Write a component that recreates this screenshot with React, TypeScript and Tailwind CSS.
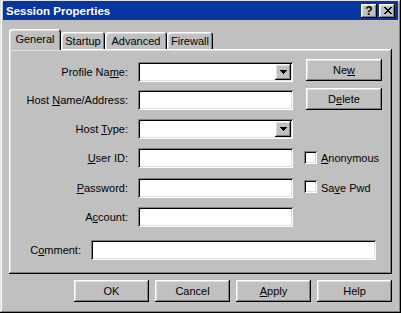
import React from "react";

const raised =
  "shadow-[inset_-1px_-1px_#000,inset_1px_1px_#fff,inset_-2px_-2px_#808080,inset_2px_2px_#dfdfdf]";
const sunken =
  "shadow-[inset_1px_1px_#808080,inset_-1px_-1px_#fff,inset_2px_2px_#000,inset_-2px_-2px_#dfdfdf]";
const tabEdge =
  "shadow-[inset_1px_1px_#fff,inset_-1px_0_#000,inset_-2px_0_#808080,inset_2px_2px_#dfdfdf]";

function Button({ children, className = "" }: { children: React.ReactNode; className?: string }) {
  return (
    <div className={`${raised} bg-[#c0c0c0] h-[22px] flex items-center justify-center leading-[15px] ${className}`}>
      {children}
    </div>
  );
}

function Field({ className = "", combo = false }: { className?: string; combo?: boolean }) {
  return (
    <div className={`${sunken} bg-white h-[20px] p-[2px] flex justify-end ${className}`}>
      {combo && (
        <div className={`${raised} bg-[#c0c0c0] w-[16px] h-[16px] flex items-center justify-center pb-[1px]`}>
          <svg width="7" height="4" viewBox="0 0 7 4">
            <path d="M0 0h7v1H0zM1 1h5v1H1zM2 2h3v1H2zM3 3h1v1H3z" fill="#000" />
          </svg>
        </div>
      )}
    </div>
  );
}

function Check({ children, className = "" }: { children: React.ReactNode; className?: string }) {
  return (
    <div className="flex items-start ml-[11px]">
      <div className={`${sunken} bg-white w-[13px] h-[13px] ${className}`} />
      <span className="ml-[4px] leading-[20px]">{children}</span>
    </div>
  );
}

function Label({ children, className = "w-[119px]" }: { children: React.ReactNode; className?: string }) {
  return <span className={`text-right leading-[20px] whitespace-nowrap ${className}`}>{children}</span>;
}

export default function App() {
  return (
    <div className="w-[401px] h-[313px] bg-[#c0c0c0] shadow-[inset_-1px_-1px_#000,inset_1px_1px_#dfdfdf,inset_-2px_-2px_#808080,inset_2px_2px_#fff] pt-[1px] px-[3px] flex flex-col text-[11px] text-black font-['Liberation_Sans',Arial,sans-serif]">
      {/* Title bar */}
      <div className="h-[19px] bg-[#0836a0] flex items-center pl-[3px] pr-[3px]">
        <span className="flex-1 text-white font-bold text-[11.5px] leading-[14px] pt-[1px]">
          Session Properties
        </span>
        <div className="flex gap-[2px]">
          <div className={`${raised} bg-[#c0c0c0] w-[16px] h-[14px] flex items-center justify-center font-bold text-[12px] leading-[12px]`}>
            ?
          </div>
          <div className={`${raised} bg-[#c0c0c0] w-[16px] h-[14px] flex items-center justify-center pb-[1px] pl-[1px]`}>
            <svg width="8" height="7" viewBox="0 0 8 7">
              <path
                d="M0 0h2v1H0zM6 0h2v1H6zM1 1h2v1H1zM5 1h2v1H5zM2 2h4v1H2zM3 3h2v1H3zM2 4h4v1H2zM1 5h2v1H1zM5 5h2v1H5zM0 6h2v1H0zM6 6h2v1H6z"
                fill="#000"
              />
            </svg>
          </div>
        </div>
      </div>

      {/* Tabs */}
      <div className="mt-[9px] ml-[6px] flex h-[20px] items-start">
        <div className={`${tabEdge} relative z-10 bg-[#c0c0c0] rounded-t-[3px] w-[52px] h-[21px] pt-[3px] text-center leading-[15px]`}>
          General
        </div>
        <div className={`${tabEdge} bg-[#c0c0c0] rounded-t-[3px] w-[44px] h-[17px] mt-[3px] pt-[2px] text-center leading-[15px]`}>
          Startup
        </div>
        <div className={`${tabEdge} bg-[#c0c0c0] rounded-t-[3px] w-[62px] h-[17px] mt-[3px] pt-[2px] text-center leading-[15px]`}>
          Advanced
        </div>
        <div className={`${tabEdge} bg-[#c0c0c0] rounded-t-[3px] w-[46px] h-[17px] mt-[3px] pt-[2px] text-center leading-[15px]`}>
          Firewall
        </div>
      </div>

      {/* Panel */}
      <div className={`${raised} mx-[6px] h-[225px] bg-[#c0c0c0] flex flex-col pt-[13px]`}>
        <div className="flex items-start h-[20px]">
          <Label>
            Profile Na<u>m</u>e:
          </Label>
          <Field combo className="ml-[10px] w-[155px]" />
          <Button className="ml-[13px] w-[76px] -mt-[3px]">
            Ne<u>w</u>
          </Button>
        </div>
        <div className="flex items-start h-[20px] mt-[8px]">
          <Label>
            Host <u>N</u>ame/Address:
          </Label>
          <Field className="ml-[10px] w-[155px]" />
          <Button className="ml-[13px] w-[76px] -mt-[2px]">
            D<u>e</u>lete
          </Button>
        </div>
        <div className="flex items-start h-[20px] mt-[9px]">
          <Label>
            Host <u>T</u>ype:
          </Label>
          <Field combo className="ml-[10px] w-[155px]" />
        </div>
        <div className="flex items-start h-[20px] mt-[9px]">
          <Label>
            <u>U</u>ser ID:
          </Label>
          <Field className="ml-[10px] w-[155px]" />
          <Check className="mt-[3px]">
            <u>A</u>nonymous
          </Check>
        </div>
        <div className="flex items-start h-[20px] mt-[10px]">
          <Label>
            <u>P</u>assword:
          </Label>
          <Field className="ml-[10px] w-[155px]" />
          <Check className="mt-[2px]">
            Sa<u>v</u>e Pwd
          </Check>
        </div>
        <div className="flex items-start h-[20px] mt-[9px]">
          <Label>
            A<u>c</u>count:
          </Label>
          <Field className="ml-[10px] w-[155px]" />
        </div>
        <div className="flex items-start h-[20px] mt-[13px]">
          <Label className="w-[72px]">
            C<u>o</u>mment:
          </Label>
          <Field className="ml-[10px] w-[285px]" />
        </div>
      </div>

      {/* Dialog buttons */}
      <div className="mt-[6px] flex justify-end gap-[6px] pr-[6px]">
        <Button className="w-[75px]">OK</Button>
        <Button className="w-[75px]">Cancel</Button>
        <Button className="w-[75px]">
          <u>A</u>pply
        </Button>
        <Button className="w-[75px]">Help</Button>
      </div>
    </div>
  );
}
